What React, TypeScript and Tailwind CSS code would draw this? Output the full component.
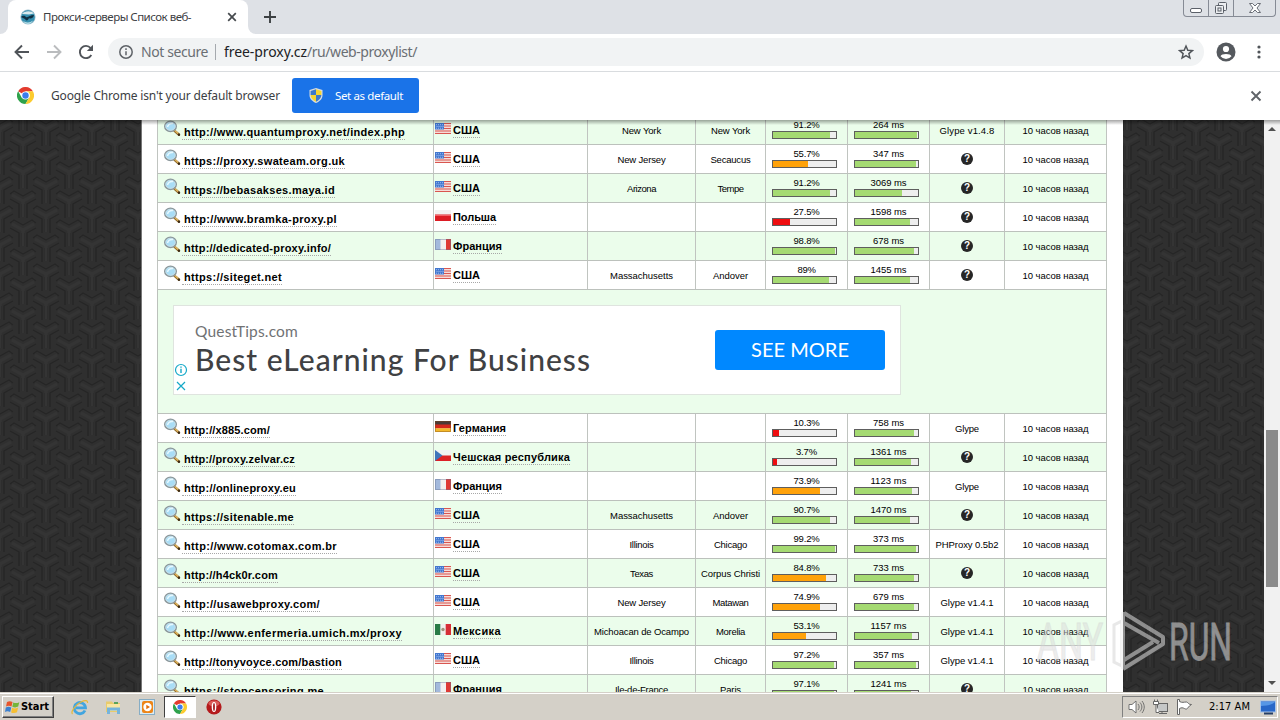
import { useLayoutEffect, useRef } from 'react';

const UI = "font-['Noto_Sans','DejaVu_Sans',sans-serif]";

/* Text set to a fixed advance width by adjusting its tracking. */
function Fit({ w, className = '', children }: { w: number; className?: string; children: string }) {
  const ref = useRef<HTMLSpanElement>(null);
  useLayoutEffect(() => {
    const el = ref.current;
    if (!el) return;
    el.style.letterSpacing = '0px';
    const natural = el.getBoundingClientRect().width;
    const s = (w - natural) / children.length;
    el.style.letterSpacing = `${s}px`;
  }, [w, children]);
  return (
    <span ref={ref} className={`inline-block whitespace-pre ${className}`}>
      {children}
    </span>
  );
}

type Country = 'us' | 'pl' | 'fr' | 'de' | 'cz' | 'mx';
const countries: Record<Country, [string, number]> = {
  us: ['США', 27],
  pl: ['Польша', 43],
  fr: ['Франция', 49],
  de: ['Германия', 53],
  cz: ['Чешская республика', 117],
  mx: ['Мексика', 48],
};

type Label = [string, number] | null;
interface Row {
  url: [string, number];
  c: Country;
  region: Label;
  city: Label;
  up: number;
  ms: number;
  soft: Label;
}

const MA: Label = ['Massachusetts', 63];
const IL: Label = ['Illinois', 24];
const CH: Label = ['Chicago', 33];
const AN: Label = ['Andover', 35];
const NJ: Label = ['New Jersey', 48];
const G1: Label = ['Glype v1.4.1', 53];

const first: Row[] = [
  { url: ['http://www.quantumproxy.net/index.php', 221], c: 'us', region: ['New York', 39], city: ['New York', 39], up: 91.2, ms: 264, soft: ['Glype v1.4.8', 55] },
  { url: ['https://proxy.swateam.org.uk', 161], c: 'us', region: NJ, city: ['Secaucus', 40], up: 55.7, ms: 347, soft: null },
  { url: ['https://bebasakses.maya.id', 151], c: 'us', region: ['Arizona', 29], city: ['Tempe', 26], up: 91.2, ms: 3069, soft: null },
  { url: ['http://www.bramka-proxy.pl', 153], c: 'pl', region: null, city: null, up: 27.5, ms: 1598, soft: null },
  { url: ['http://dedicated-proxy.info/', 147], c: 'fr', region: null, city: null, up: 98.8, ms: 678, soft: null },
  { url: ['https://siteget.net', 98], c: 'us', region: MA, city: AN, up: 89, ms: 1455, soft: null },
];
const second: Row[] = [
  { url: ['http://x885.com/', 86], c: 'de', region: null, city: null, up: 10.3, ms: 758, soft: ['Glype', 24] },
  { url: ['http://proxy.zelvar.cz', 111], c: 'cz', region: null, city: null, up: 3.7, ms: 1361, soft: null },
  { url: ['http://onlineproxy.eu', 112], c: 'fr', region: null, city: null, up: 73.9, ms: 1123, soft: ['Glype', 24] },
  { url: ['https://sitenable.me', 110], c: 'us', region: MA, city: AN, up: 90.7, ms: 1470, soft: null },
  { url: ['http://www.cotomax.com.br', 153], c: 'us', region: IL, city: CH, up: 99.2, ms: 373, soft: ['PHProxy 0.5b2', 63] },
  { url: ['http://h4ck0r.com', 94], c: 'us', region: ['Texas', 23], city: ['Corpus Christi', 59], up: 84.8, ms: 733, soft: null },
  { url: ['http://usawebproxy.com/', 136], c: 'us', region: NJ, city: ['Matawan', 36], up: 74.9, ms: 679, soft: G1 },
  { url: ['http://www.enfermeria.umich.mx/proxy', 218], c: 'mx', region: ['Michoacan de Ocampo', 95], city: ['Morelia', 29], up: 53.1, ms: 1157, soft: G1 },
  { url: ['http://tonyvoyce.com/bastion', 158], c: 'us', region: IL, city: CH, up: 97.2, ms: 357, soft: G1 },
  { url: ['https://stopcensoring.me', 140], c: 'fr', region: ['Ile-de-France', 53], city: ['Paris', 21], up: 97.1, ms: 1241, soft: null },
];

function Flag({ c }: { c: Country }) {
  return (
    <svg width="16" height="11" viewBox="0 0 16 11" className="block shrink-0">
      {c === 'us' && (
        <>
          <rect width="16" height="11" fill="#f6dcd8" />
          <path d="M0 .5h16M0 3h16M0 5.5h16M0 8h16M0 10.5h16" stroke="#d95650" />
          <rect width="9" height="6.5" fill="#4377cf" />
          <path d="M1 1.7h7.500M1.500 3.500h7M1 5.200h7.500" stroke="#b3cff7" strokeWidth=".8" strokeDasharray="1 1" />
        </>
      )}
      {c === 'pl' && (
        <>
          <rect width="16" height="11" fill="#f3f1f1" />
          <rect y="4.500" width="16" height="6.500" fill="#dc1c24" />
          <path d="M0 5.500h16" stroke="#f26066" />
        </>
      )}
      {c === 'fr' && (
        <>
          <rect width="16" height="11" fill="#f3f0f0" />
          <rect width="5.500" height="11" fill="#a3b9dc" />
          <rect x="11" width="5" height="11" fill="#de3a36" />
          <path d="M.5.5h15v10H.5z" fill="none" stroke="#65718f" strokeOpacity=".4" />
        </>
      )}
      {c === 'de' && (
        <>
          <rect width="16" height="4" fill="#4a3a36" />
          <rect y="3.500" width="16" height="4" fill="#d3281c" />
          <rect y="7.300" width="16" height="3.700" fill="#f4b92b" />
          <path d="M.5.5h15v10H.5z" fill="none" stroke="#7c4a20" strokeOpacity=".4" />
        </>
      )}
      {c === 'cz' && (
        <>
          <rect width="16" height="11" fill="#f0f1f3" />
          <rect y="5.500" width="16" height="5.500" fill="#dc2027" />
          <path d="M0 0l7.500 5.500L0 11z" fill="#3f74bb" />
        </>
      )}
      {c === 'mx' && (
        <>
          <rect width="16" height="11" fill="#f1efed" />
          <rect width="5.300" height="11" fill="#277a45" />
          <rect x="10.700" width="5.300" height="11" fill="#d62d36" />
          <circle cx="8" cy="5.500" r="1.700" fill="#a0917c" />
        </>
      )}
    </svg>
  );
}

function Magnifier() {
  return (
    <svg width="18" height="17" viewBox="0 0 18 17" className="block shrink-0">
      <path d="M11.500 10.800l4.300 3.700" stroke="#8a6426" strokeWidth="2.400" strokeLinecap="round" />
      <path d="M11.500 10.300l3.300 2.800" stroke="#ddb25c" strokeWidth="1.500" strokeLinecap="round" />
      <circle cx="16" cy="14.800" r="1.200" fill="#3c2b14" />
      <ellipse cx="7.500" cy="6.300" rx="5.800" ry="5.100" fill="#a9ddf6" stroke="#8b979b" strokeWidth="1.500" />
      <ellipse cx="7.500" cy="6.300" rx="4.800" ry="4.100" fill="none" stroke="#d3e2e7" strokeWidth=".7" />
      <path d="M4.500 7c.8-3 3-3.800 5.500-3.500" stroke="#e6f8ff" strokeWidth="1.400" fill="none" />
    </svg>
  );
}

function Unknown() {
  return (
    <span className="mt-[8px] flex size-[12px] items-center justify-center rounded-full bg-[#262626] font-['Liberation_Sans',sans-serif] text-[10px] leading-[12px] font-bold text-white">
      ?
    </span>
  );
}

function Meter({ text, w, fill, color }: { text: string; w: number; fill: number; color: string }) {
  return (
    <div className="flex flex-col items-center border-l border-[#c0c4c0] pt-[3px]">
      <Fit w={w} className="h-[12px]">{text}</Fit>
      <div className="ml-[6px] h-[8px] w-[65px] self-start border border-[#5e5e5e] bg-[#eeeeee]">
        <div className={`h-full ${color}`} style={{ width: `${fill}%` }} />
      </div>
    </div>
  );
}

const cell = 'flex justify-center border-l border-[#c0c4c0]';

function Cell({ v }: { v: Label }) {
  return <div className={cell}>{v && <Fit w={v[1]} className="mt-[9px] h-[12px]">{v[0]}</Fit>}</div>;
}

function ProxyRow({ r, green }: { r: Row; green: boolean }) {
  const upText = `${r.up}%`;
  const upW = upText.length === 5 ? 26 : upText.length === 4 ? 21 : 18;
  const upColor = r.up < 50 ? 'bg-[#ef0d10]' : r.up < 85 ? 'bg-[#ffa20a]' : 'bg-[#a5da72]';
  const [name, nameW] = countries[r.c];
  return (
    <div
      className={`grid h-[29px] shrink-0 grid-cols-[276px_154px_108px_70px_82px_82px_75px_103px] border-b border-[#bcc1bc] text-[9.5px] leading-[12px] text-black ${green ? 'bg-[#ebfdeb]' : 'bg-white'}`}
    >
      <div className="flex border-l border-[#c0c4c0] pl-[5px] text-[11px] font-bold">
        <div className="pt-[4px]"><Magnifier /></div>
        <div className="mt-[10px] ml-px h-[14px] border-b border-dotted border-[#a8a8a8] pl-[2px]">
          <Fit w={r.url[1]}>{r.url[0]}</Fit>
        </div>
      </div>
      <div className="flex border-l border-[#c0c4c0] pl-px text-[11px] font-bold">
        <div className="pt-[7px]"><Flag c={r.c} /></div>
        <div className="mt-[8px] ml-[2px] h-[14px] border-b border-dotted border-[#a8a8a8]">
          <Fit w={nameW}>{name}</Fit>
        </div>
      </div>
      <Cell v={r.region} />
      <Cell v={r.city} />
      <Meter text={upText} w={upW} fill={Math.max(r.up, 6)} color={upColor} />
      <Meter text={`${r.ms} ms`} w={r.ms > 999 ? 36 : 31} fill={100 - r.ms / 120} color="bg-[#a5da72]" />
      {r.soft ? <Cell v={r.soft} /> : <div className={cell}><Unknown /></div>}
      <div className="flex justify-center border-x border-[#c0c4c0]">
        <Fit w={66} className="mt-[9px] h-[12px]">10 часов назад</Fit>
      </div>
    </div>
  );
}

/* Woven tri-arm wallpaper on both sides of the page. */
function Wallpaper({ id, shift }: { id: string; shift: number }) {
  const spots = [[0, -1], [46, -1], [0, 28], [46, 28], [23, 13], [23, 42], [23, -16]];
  return (
    <svg className="block h-full w-full">
      <defs>
        <pattern id={id} width="46" height="29" patternUnits="userSpaceOnUse" patternTransform={`translate(${shift} 6)`}>
          <rect width="46" height="29" fill="#2f2f2f" />
          {spots.map(([x, y]) => (
            <g key={`${x}-${y}`} transform={`translate(${x} ${y})`} fill="none">
              <path d="M-13-3L-9-6 0-1 9-6 13-3M-13 2L-4 7v14M13 2L4 7v14" stroke="#252525" strokeWidth="1.400" />
              <path d="M-11-2L0 4 11-2M0 4v16" stroke="#343434" strokeWidth="3" />
              <path d="M-1.500 7v13M1.500 7v13" stroke="#2c2c2c" strokeWidth=".8" />
            </g>
          ))}
        </pattern>
      </defs>
      <rect width="100%" height="100%" fill={`url(#${id})`} />
    </svg>
  );
}

function ChromeLogo({ s }: { s: number }) {
  return (
    <svg width={s} height={s} viewBox="0 0 24 24" className="block shrink-0">
      <path d="M12 12L1.600 6A12 12 0 0122.400 6L12 6z" fill="#e33b2e" />
      <path d="M1.600 6A12 12 0 0012 24l5.200-9L12 12 6.800 15z" fill="#2fa24c" />
      <path d="M22.400 6A12 12 0 0112 24l5.200-9a6 6 0 00-5.200-9z" fill="#fccb2e" />
      <circle cx="12" cy="12" r="5.700" fill="#fff" />
      <circle cx="12" cy="12" r="4.500" fill="#3b7ded" />
    </svg>
  );
}

function WindowButtons() {
  return (
    <div className="mr-[4px] ml-auto flex h-[17px] w-[93px] rounded-b-[4px] border border-t-0 border-[#868b95] text-[#5b6069]">
      <div className="flex w-[25px] justify-center border-r border-[#868b95]">
        <svg width="14" height="16" fill="#fff" stroke="currentColor"><rect x="1.500" y="8.500" width="11" height="4" rx="1.500" /></svg>
      </div>
      <div className="flex w-[25px] justify-center border-r border-[#868b95]">
        <svg width="14" height="16" fill="#eceef1" stroke="currentColor">
          <rect x="4.500" y="2.500" width="8" height="8" rx="1" />
          <rect x="1.500" y="5.500" width="8" height="8" rx="1" />
          <rect x="4" y="8" width="3" height="3" />
        </svg>
      </div>
      <div className="flex flex-1 justify-center">
        <svg width="14" height="16" fill="#fff" stroke="currentColor" strokeWidth=".9">
          <path d="M1.500 3.500h3L7 6l2.500-2.500h3L9 8l3.500 4.500h-3L7 10l-2.500 2.500h-3L5 8z" />
        </svg>
      </div>
    </div>
  );
}

function TabStrip() {
  return (
    <div className="flex h-[34px] bg-[#dee1e6]">
      <div className="flex w-[8px] items-end bg-white"><div className="h-full w-full rounded-br-[8px] bg-[#dee1e6]" /></div>
      <div className="bg-[#dee1e6]">
        <div className="flex h-[34px] w-[240px] items-center rounded-t-[8px] bg-white pl-[12px]">
          <svg width="16" height="16" viewBox="0 0 16 16">
            <circle cx="8" cy="8" r="7.600" fill="#9fc0cf" />
            <circle cx="8" cy="8" r="6.800" fill="#348eae" />
            <path d="M2 5c2-3 9-4 12-.5L9 5.500z" fill="#d7e8ed" />
            <path d="M1 8c2-2 4-1 5 0 2 1 4-2 8-2-1 4-4 4-5 3-1 3-3 3-4 1z" fill="#102f42" />
            <path d="M3 12c3 2 7 2 10-.5-1 2-3 3.500-5 3.500s-4-1-5-3z" fill="#b4dbe4" />
          </svg>
          <Fit w={148} className="ml-[7px] h-[16px] text-[11.5px] leading-[16px] text-[#3c4043]">Прокси-серверы Список веб-</Fit>
          <svg width="10" height="10" viewBox="0 0 10 10" className="ml-[36px]"><path d="M1.200 1.200l7.600 7.600M8.800 1.200L1.200 8.800" stroke="#45494d" strokeWidth="1.700" /></svg>
        </div>
      </div>
      <div className="w-[8px] bg-white"><div className="h-full w-full rounded-bl-[8px] bg-[#dee1e6]" /></div>
      <svg width="12" height="12" viewBox="0 0 12 12" className="mt-[11px] ml-[8px]"><path d="M6 0v12M0 6h12" stroke="#3c4043" strokeWidth="1.900" /></svg>
      <WindowButtons />
    </div>
  );
}

function Toolbar() {
  return (
    <div className="flex h-[38px] items-center border-b border-[#d9dcdf] bg-white pb-px pl-[14px]">
      <svg width="16" height="16" viewBox="0 0 16 16" fill="none" stroke="#505459" strokeWidth="1.900"><path d="M15 8H2M8 1.500L1.500 8 8 14.500" /></svg>
      <svg width="16" height="16" viewBox="0 0 16 16" fill="none" stroke="#babcbe" strokeWidth="1.900" className="ml-[16px]"><path d="M1 8h13M8 1.500L14.500 8 8 14.500" /></svg>
      <svg width="16" height="16" viewBox="0 0 16 16" fill="none" className="ml-[16px]">
        <path d="M13.300 11A6.100 6.100 0 1 1 12.600 4" stroke="#505459" strokeWidth="1.900" />
        <path d="M15 .8V7H8.800z" fill="#505459" />
      </svg>
      <div className="ml-[14px] flex h-[28px] w-[1096px] items-center rounded-full bg-[#f1f3f4] pl-[11px] text-[14px] leading-[20px]">
        <svg width="14" height="14" viewBox="0 0 14 14" fill="none" stroke="#5f6368" strokeWidth="1.500"><circle cx="7" cy="7" r="6.200" /><path d="M7 6.200v4M7 3.300v1.600" /></svg>
        <Fit w={67} className="ml-[8px] text-[#6a6e73]">Not secure</Fit>
        <div className="ml-[7px] h-[16px] w-px bg-[#a5a9ae]" />
        <Fit w={83} className="ml-[8px] text-[#202124]">free-proxy.cz</Fit>
        <Fit w={110} className="text-[#6a6e73]">/ru/web-proxylist/</Fit>
        <svg width="16" height="16" viewBox="0 0 24 24" className="mr-[10px] ml-auto" fill="none" stroke="#505459" strokeWidth="2.200"><path d="M12 3l2.700 6.300 6.800.6-5.200 4.500 1.600 6.700L12 17.500l-5.900 3.600 1.600-6.700L2.500 9.900l6.800-.6z" /></svg>
      </div>
      <svg width="20" height="20" viewBox="0 0 20 20" className="ml-[12px]">
        <circle cx="10" cy="10" r="9.500" fill="#55595e" />
        <circle cx="10" cy="7" r="3.100" fill="#fff" />
        <path d="M4.500 14.300c.8-3 10.200-3 11 0a7 7 0 01-11 0z" fill="#fff" />
      </svg>
      <svg width="4" height="14" viewBox="0 0 4 14" className="ml-[21px]" fill="#505459"><circle cx="2" cy="2" r="1.600" /><circle cx="2" cy="7" r="1.600" /><circle cx="2" cy="12" r="1.600" /></svg>
    </div>
  );
}

function InfoBar() {
  return (
    <div className="flex h-[48px] items-center bg-white pb-px pl-[17px] text-[12px] leading-[16px] text-[#3c4043]">
      <ChromeLogo s={17} />
      <Fit w={229} className="ml-[17px]">Google Chrome isn't your default browser</Fit>
      <div className="ml-[12px] flex h-[35px] w-[127px] items-center rounded-[3px] bg-[#1a73e8] pl-[17px] text-[11.5px] text-white">
        <svg width="14" height="15" viewBox="0 0 14 15">
          <path d="M7 0l6.500 2v5c0 4-3 6.500-6.500 8C3.500 13.500.5 11 .5 7V2z" fill="#d8dde0" />
          <path d="M7 1.300V7H1.600V2.900z" fill="#3b79c9" /><path d="M7 1.300V7h5.400V2.900z" fill="#f5d52e" />
          <path d="M7 7v6.700C4 12 1.800 10.500 1.600 7z" fill="#f5d52e" /><path d="M7 7v6.700c3-1.700 5.200-3.200 5.400-6.700z" fill="#3b79c9" />
        </svg>
        <Fit w={68} className="ml-[12px]">Set as default</Fit>
      </div>
      <svg width="12" height="12" viewBox="0 0 12 12" className="mr-[18px] ml-auto"><path d="M1.500 1.500l9 9M10.500 1.500l-9 9" stroke="#5f6368" strokeWidth="1.900" /></svg>
    </div>
  );
}

function AdRow() {
  return (
    <div className="h-[124px] shrink-0 border border-t-0 border-[#bcc1bc] bg-[#ebfdeb] pt-[15px] pl-[15px]">
      <div className="flex h-[90px] w-[728px] border border-[#dfe4df] bg-white">
        <svg width="14" height="30" viewBox="0 0 14 30" className="mt-[56px] shrink-0" fill="none" stroke="#15a9c8" strokeWidth="1.200">
          <circle cx="7" cy="8" r="5.500" /><path d="M7 6.800V11M7 4.500v1.200" strokeWidth="1.400" /><path d="M3 20l8 8M11 20l-8 8" />
        </svg>
        <div className="flex w-[527px] shrink-0 flex-col items-start pt-[15px] pl-[7px]">
          <Fit w={103} className="h-[20px] font-['Lato',sans-serif] text-[15.5px] leading-[20px] text-[#707274]">QuestTips.com</Fit>
          <Fit w={396} className="h-[36px] font-['Lato',sans-serif] text-[30px] leading-[36px] font-medium text-[#404143]">Best eLearning For Business</Fit>
        </div>
        <div className="mt-[24px] flex h-[40px] w-[170px] shrink-0 items-center justify-center rounded-[3px] bg-[#0088ff] pb-[3px] font-['Lato',sans-serif] text-[20px] leading-[24px] text-white">
          <Fit w={98}>SEE MORE</Fit>
        </div>
      </div>
    </div>
  );
}

function Watermark() {
  return (
    <svg width="200" height="70" viewBox="0 0 200 70" className="absolute top-[486px] left-[1034px] opacity-50">
      <g fontFamily="Roboto, sans-serif" fontSize="52" fontWeight="400">
        <text x="3" y="54" textLength="66" lengthAdjust="spacingAndGlyphs" fill="#dcdcdc" stroke="#cfcfcf" strokeWidth="1">ANY</text>
        <text x="135" y="54" textLength="63" lengthAdjust="spacingAndGlyphs" fill="#efefef" stroke="#efefef" strokeWidth=".8">RUN</text>
      </g>
      <path d="M88 52V60l-8-4V19l8-4v37" fill="none" stroke="#d2d2d2" strokeWidth="3" />
      <path d="M89 6v57M90 7l39 24v7L89 63M90 17l35 20M90 54l29-18" fill="none" stroke="#efefef" strokeWidth="4" strokeLinejoin="round" />
    </svg>
  );
}

function Page() {
  return (
    <div className="relative flex h-[572px] overflow-hidden">
      <div className="w-[141px]"><Wallpaper id="weaveLeft" shift={0} /></div>
      <div className="flex w-[982px] flex-col border-l border-[#777] bg-white pr-[16px] pl-[15px] font-['Liberation_Sans',Arial,sans-serif]">
        <div className="-mt-[4px] flex flex-col">
          {first.map((r, i) => <ProxyRow key={r.url[0]} r={r} green={i % 2 === 0} />)}
          <AdRow />
          {second.map((r, i) => <ProxyRow key={r.url[0]} r={r} green={i % 2 === 1} />)}
        </div>
      </div>
      <div className="w-[141px]"><Wallpaper id="weaveRight" shift={-19} /></div>
      <div className="flex w-[16px] flex-col items-center bg-[#f1f1f1]">
        <svg width="8" height="4" className="mt-[7px] shrink-0" fill="#505050"><path d="M0 4l4-4 4 4z" /></svg>
        <div className="mt-[299px] h-[157px] w-[12px] shrink-0 bg-[#8b8b8b]" />
        <svg width="8" height="4" className="mt-[94px] shrink-0" fill="#505050"><path d="M0 0l4 4 4-4z" /></svg>
      </div>
      <div className="absolute inset-x-0 top-0 h-[5px] bg-linear-to-b from-black/35 to-transparent" />
      <Watermark />
    </div>
  );
}

function Taskbar() {
  return (
    <div className="flex h-[28px] items-center border-t border-[#d4d0c8] bg-[#d4d0c8] pt-px shadow-[inset_0_1px_0_#fff]">
      <div className="ml-[2px] flex h-[22px] w-[52px] items-center border border-t-white border-r-[#404040] border-b-[#404040] border-l-white pl-[2px] shadow-[inset_-1px_-1px_0_#808080]">
        <svg width="15" height="14" viewBox="0 0 15 14">
          <path d="M2 2c2-1 3.500-1 5.500 0L6.500 6.500C4.500 5.500 3 5.500 1 6.500z" fill="#e7552b" />
          <path d="M8.300 2.400c2 1 3.700.9 6-.2L13.200 6.600c-2 1-3.700 1-5.900.2z" fill="#75b53a" />
          <path d="M.8 7.400c2-1 3.500-1 5.500 0L5.200 12c-2-1-3.500-1-5.200 0z" fill="#3b80cf" />
          <path d="M7.100 7.700c2 1 3.700.9 6-.2L12 12.300c-2 1-3.700 1-5.900.2z" fill="#f6bf32" />
        </svg>
        <Fit w={29} className="h-[14px] pl-px font-['DejaVu_Sans_Condensed','DejaVu_Sans',sans-serif] text-[11px] leading-[14px] font-bold text-black">Start</Fit>
      </div>
      <svg width="18" height="17" viewBox="0 0 18 17" className="ml-[17px]" fill="none">
        <path d="M14 11.500A5.600 5.600 0 1 1 14.500 8.800H5" stroke="#42a5df" strokeWidth="2.800" />
        <path d="M1.500 15C-.5 13 4 6 10 3c4-2 7-2 6.500 1" stroke="#e6b83a" strokeWidth="1.200" />
      </svg>
      <svg width="17" height="16" viewBox="0 0 17 16" className="ml-[16px]">
        <path d="M1 2.500h6l1 1.500h7v9H1z" fill="#e9cb6c" /><path d="M2 5h13v7H2z" fill="#f8e6a2" />
        <path d="M2 8.500h13V15h-3v-3.500H5V15H2z" fill="#76b4dc" /><path d="M9 3h4v2H9z" fill="#5aa35b" />
      </svg>
      <svg width="16" height="16" viewBox="0 0 16 16" className="ml-[17px]">
        <rect x=".5" y=".5" width="15" height="15" fill="#dcecf4" stroke="#86adc5" />
        <rect x="3" y="2" width="11" height="12" rx="2" fill="#ed8518" /><circle cx="8.500" cy="8" r="4.200" fill="#fff" /><path d="M7.300 5.700v4.600L11 8z" fill="#e36e0b" />
      </svg>
      <div className="ml-[9px] flex h-[22px] w-[32px] items-center justify-center border border-t-[#404040] border-r-white border-b-white border-l-[#404040] bg-white"><ChromeLogo s={14} /></div>
      <svg width="16" height="16" viewBox="0 0 16 16" className="ml-[10px]"><circle cx="8" cy="8" r="7.600" fill="#b41a1c" /><ellipse cx="8" cy="4.500" rx="5.500" ry="3" fill="#db5b58" /><ellipse cx="8" cy="8" rx="2.300" ry="5" fill="#fff" /><ellipse cx="8" cy="8" rx=".9" ry="4" fill="#a11518" /></svg>
      <div className="mr-[2px] ml-auto flex h-[22px] w-[156px] items-center border border-t-[#808080] border-r-white border-b-white border-l-[#808080] pl-[5px]">
        <svg width="17" height="16" viewBox="0 0 17 16" fill="#fff" stroke="#666" strokeWidth=".9"><path d="M1 5.500h3L8 2v12L4 10.500H1z" /><path d="M10 5c1.500 2 1.500 4 0 6M12 3.500c2.500 3 2.500 6 0 9M14 2c3 4 3 8 0 12" fill="none" /></svg>
        <svg width="17" height="16" viewBox="0 0 17 16" className="ml-[7px]" fill="none" stroke="#666"><rect x="5.500" y="4.500" width="10" height="8" fill="#c5c7c7" /><path d="M7 14.500h8M10 12.500v2" /><path d="M1.500 2.500h5v3h-5zM2.500.5v2M5.500.5v2M4 5.500v8h3" fill="#fff" /></svg>
        <svg width="17" height="16" viewBox="0 0 17 16" className="ml-[7px]" fill="#fff" stroke="#666"><path d="M1.500.5v15h2V9.500c4-2 5 1 7 .5 1.500-.3 2-3 5-4.500-3 .3-3-2-5-2.500-3 0-4 1-7-.5v-2z" /></svg>
        <Fit w={41} className="ml-[16px] h-[14px] font-['DejaVu_Sans_Condensed','DejaVu_Sans',sans-serif] text-[11px] leading-[14px] text-black">2:17 AM</Fit>
        <svg width="17" height="15" viewBox="0 0 17 15" className="ml-[10px]"><rect x=".5" y="1" width="15" height="11" fill="#2867c8" stroke="#a6c3e9" /><path d="M1 6c5-1 9 0 14-4V2H1z" fill="#5797e6" /><path d="M4 13.500h9" stroke="#263e64" strokeWidth="2" /></svg>
      </div>
    </div>
  );
}

export default function App() {
  return (
    <div className={`flex h-[720px] w-[1280px] flex-col overflow-hidden bg-white ${UI}`}>
      <TabStrip />
      <Toolbar />
      <InfoBar />
      <Page />
      <Taskbar />
    </div>
  );
}
